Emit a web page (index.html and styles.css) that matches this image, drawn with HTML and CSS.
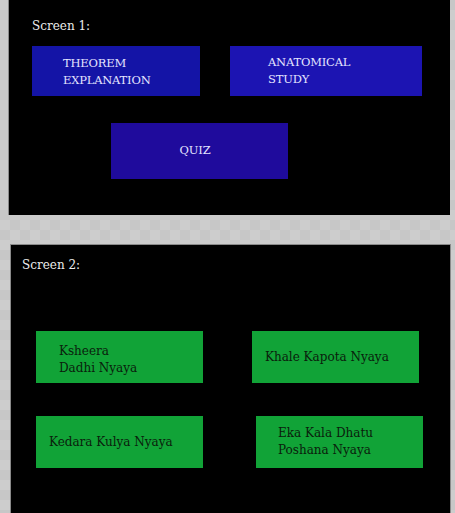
FILE: index.html
```html
<!DOCTYPE html>
<html>
<head>
<meta charset="utf-8">
<link rel="stylesheet" href="styles.css">
</head>
<body>
  <section class="panel panel-one">
    <div class="label">Screen 1:</div>
    <div class="row row-top">
      <div class="btn blue theorem"><span>THEOREM<br>EXPLANATION</span></div>
      <div class="btn blue anatomy"><span>ANATOMICAL<br>STUDY</span></div>
    </div>
    <div class="row row-quiz">
      <div class="btn purple quiz"><span>QUIZ</span></div>
    </div>
  </section>
  <section class="panel panel-two">
    <div class="label">Screen 2:</div>
    <div class="grid">
      <div class="btn green g1"><span>Ksheera<br>Dadhi Nyaya</span></div>
      <div class="btn green g2"><span>Khale Kapota Nyaya</span></div>
      <div class="btn green g3"><span>Kedara Kulya Nyaya</span></div>
      <div class="btn green g4"><span>Eka Kala Dhatu<br>Poshana Nyaya</span></div>
    </div>
  </section>
</body>
</html>
```

FILE: styles.css
```css
html, body {
  margin: 0;
  padding: 0;
}
body {
  width: 455px;
  height: 513px;
  overflow: hidden;
  background-color: #cdcdcd;
  background-image: conic-gradient(#c7c7c7 25%, #cdcdcd 0 50%, #c7c7c7 0 75%, #cdcdcd 0);
  background-size: 20px 20px;
  font-family: "DejaVu Serif", "Liberation Serif", serif;
}
.panel {
  background: #000;
  box-sizing: border-box;
}
.panel-one {
  margin-left: 8px;
  width: 442px;
  height: 215px;
  border-left: 1px solid #8a8a8a;
  padding: 17px 0 0 23px;
}
.panel-two {
  margin: 29px 0 0 10px;
  width: 441px;
  height: 269px;
  border: 1px solid #8a8a8a;
  border-bottom: none;
  padding: 11px 0 0 11px;
}
.label {
  color: #ececec;
  font-size: 12px;
  line-height: 18px;
}
.row {
  display: flex;
}
.row-top {
  margin-top: 11px;
  gap: 30px;
}
.row-quiz {
  margin-top: 27px;
  padding-left: 79px;
}
.btn {
  box-sizing: border-box;
  display: flex;
  align-items: center;
  font-size: 11.5px;
  line-height: 17px;
}
.blue, .purple {
  color: #e4e4ff;
  letter-spacing: -0.2px;
}
.theorem {
  width: 168px;
  height: 50px;
  background: #1414a6;
  padding-left: 31px;
  padding-top: 1px;
}
.anatomy {
  width: 192px;
  height: 50px;
  background: #1c14b2;
  padding-left: 38px;
}
.quiz {
  width: 177px;
  height: 56px;
  background: #1f0b9c;
  justify-content: center;
  padding-right: 9px;
  padding-bottom: 2px;
}
.grid {
  margin-top: 57px;
  display: grid;
  grid-template-columns: 167px 167px;
  grid-template-rows: 52px 52px;
  column-gap: 49px;
  row-gap: 33px;
  padding-left: 14px;
}
.green {
  background: #11a337;
  color: #0a200c;
  font-size: 12px;
}
.g1 { padding-left: 23px; padding-top: 5px; }
.g2 { padding-left: 13px; padding-top: 1px; }
.g3 { padding-left: 13px; padding-top: 1px; }
.g4 { padding-left: 22px; margin-left: 4px; width: 167px; }
```
